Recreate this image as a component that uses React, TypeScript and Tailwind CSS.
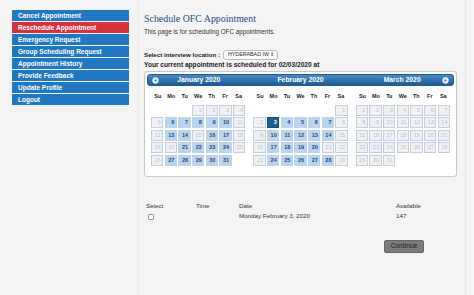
import React from "react";

const menu = [
  "Cancel Appointment",
  "Reschedule Appointment",
  "Emergency Request",
  "Group Scheduling Request",
  "Appointment History",
  "Provide Feedback",
  "Update Profile",
  "Logout",
];

type Month = { name: string; start: number; days: number; avail: number[]; selected?: number };

const months: Month[] = [
  { name: "January 2020", start: 3, days: 31, avail: [6, 7, 8, 9, 10, 13, 14, 16, 17, 21, 22, 23, 24, 27, 28, 29, 30, 31] },
  { name: "February 2020", start: 6, days: 29, avail: [3, 4, 5, 6, 7, 10, 11, 12, 13, 14, 17, 18, 19, 20, 24, 25, 26, 27, 28], selected: 3 },
  { name: "March 2020", start: 0, days: 31, avail: [] },
];

const wd = ["Su", "Mo", "Tu", "We", "Th", "Fr", "Sa"];

function NavIcon({ dir }: { dir: "l" | "r" }) {
  return (
    <svg width="7" height="7" viewBox="0 0 8 8">
      <circle cx="4" cy="4" r="3.6" fill="#e8f0f8" />
      {dir === "l" ? <path d="M5 2.3 L2.6 4 L5 5.7Z" fill="#2f6fa5" /> : <path d="M3 2.3 L5.4 4 L3 5.7Z" fill="#2f6fa5" />}
    </svg>
  );
}

function MonthGrid({ m }: { m: Month }) {
  const cells: (number | null)[] = [];
  for (let i = 0; i < m.start; i++) cells.push(null);
  for (let d = 1; d <= m.days; d++) cells.push(d);
  return (
    <div className="w-[103px] px-[4px]">
      <div className="grid grid-cols-7 h-[12px] items-center text-[5.5px] font-bold text-[#222] mt-[4px] mb-[3px]">
        {wd.map((w) => (
          <div key={w} className="text-center">{w}</div>
        ))}
      </div>
      <div className="grid grid-cols-7 gap-x-[1.5px] gap-y-[1.4px]">
        {cells.map((d, i) => {
          if (d === null) return <div key={i} className="h-[11px]" />;
          const sel = m.selected === d;
          const av = m.avail.includes(d);
          const cls = sel
            ? "bg-[#1d5e93] border-[#1a4f7c] text-white font-bold"
            : av
            ? "bg-[#bdd4ee] border-[#bdd4ee] text-[#1c4a75] font-bold"
            : "bg-[#eef2f6] border-[#c7d0da] text-[#b9c3cd]";
          return (
            <div key={i} className={`h-[11px] border text-[5.5px] leading-[9px] text-right pr-[1.5px] ${cls}`}>
              {d}
            </div>
          );
        })}
      </div>
    </div>
  );
}

export default function App() {
  return (
    <div
      className="w-[474px] h-[295px] bg-[#f4f4f4] flex overflow-hidden"
      style={{ fontFamily: '"Liberation Sans", Arial, sans-serif' }}
    >
      <div className="w-[139px] shrink-0 pt-[10px] pl-[12px] border-r border-[#ececec]">
        <div className="w-[117px] flex flex-col gap-[1px]">
          {menu.map((m, i) => (
            <div
              key={m}
              className={`h-[11px] pl-[6px] text-[6.5px] leading-[11px] font-bold text-white ${i === 1 ? "bg-[#d6323c]" : "bg-[#1f78c1]"}`}
            >
              {m}
            </div>
          ))}
        </div>
      </div>
      <div className="w-[326px] shrink-0 pl-[5px] pt-[12px]">
        <div
          className="text-[9.9px] leading-[14px] text-[#1f4f7f]"
          style={{ fontFamily: '"Liberation Serif", "Times New Roman", serif' }}
        >
          Schedule OFC Appointment
        </div>
        <div className="text-[6.3px] leading-[8px] text-[#333] mt-[2px]">This page is for scheduling OFC appointments.</div>
        <div className="flex items-center mt-[13px] h-[11px]">
          <span className="text-[6.2px] font-bold text-[#222]">Select interview location :</span>
          <div className="ml-[3px] w-[55px] h-[10px] border border-[#bbb] rounded-[3px] bg-white flex items-center justify-between pl-[4px] pr-[3px] text-[5.3px] text-[#222] whitespace-nowrap">
            <span>HYDERABAD IW</span>
            <span className="text-[5px]">⇕</span>
          </div>
        </div>
        <div className="text-[6.6px] font-bold text-[#222] leading-[8px] mt-[1px] whitespace-nowrap">
          Your current appointment is scheduled for 02/03/2020 at
        </div>
        <div className="mt-[2px] w-[313px] h-[106px] bg-white border border-[#c8c8c8] rounded-[3px] p-[2px]">
          <div className="h-[12px] rounded-[3px] bg-gradient-to-b from-[#4a8ac2] to-[#1c5c92] border border-[#1f5d90] flex items-center relative">
            <div className="absolute left-[4px] top-[2px]"><NavIcon dir="l" /></div>
            <div className="absolute right-[4px] top-[2px]"><NavIcon dir="r" /></div>
            {months.map((m) => (
              <div key={m.name} className="w-[103px] text-center text-[6.8px] font-bold text-white">
                {m.name}
              </div>
            ))}
          </div>
          <div className="flex">
            {months.map((m) => (
              <MonthGrid key={m.name} m={m} />
            ))}
          </div>
        </div>
        <div className="mt-[24px] pl-[2px] text-[6.2px] text-[#333]">
          <div className="flex h-[9px] items-center">
            <div className="w-[50px]">Select</div>
            <div className="w-[43px]">Time</div>
            <div className="w-[157px]">Date</div>
            <div>Available</div>
          </div>
          <div className="flex h-[12px] items-center">
            <div className="w-[50px] pl-[2px] pt-[2px]">
              <div className="w-[6px] h-[6px] border border-[#999] rounded-[1px] bg-white" />
            </div>
            <div className="w-[43px]" />
            <div className="w-[157px]">Monday February 3, 2020</div>
            <div>147</div>
          </div>
          <div className="flex justify-end pr-[41px] mt-[18px]">
            <div className="w-[40px] h-[13px] bg-[#7b7b7b] rounded-[2px] border border-[#666] text-[6.8px] text-[#222] flex items-center justify-center">
              Continue
            </div>
          </div>
        </div>
      </div>
      <div className="flex-1 border-l border-[#e6e6e6] bg-[#f6f6f6]" />
    </div>
  );
}
